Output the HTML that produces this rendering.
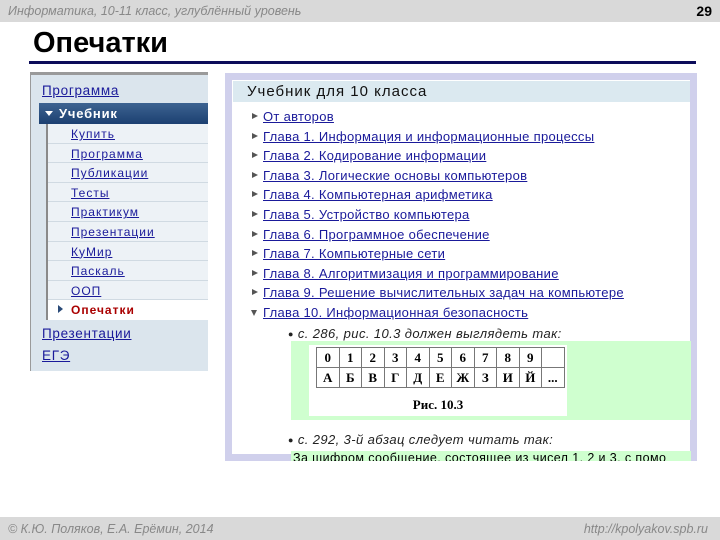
<!DOCTYPE html>
<html><head><meta charset="utf-8"><style>
*{margin:0;padding:0;box-sizing:border-box}
body{width:720px;height:540px;position:relative;background:#fff;font-family:"Liberation Sans",sans-serif;overflow:hidden}
.abs{position:absolute}
.top{left:0;top:0;width:720px;height:22px;background:#d9d9d9}
.top i{position:absolute;left:8px;top:4px;font-size:12.5px;color:#888}
.top b{position:absolute;right:8px;top:3px;font-size:14px;color:#000}
.bot{left:0;top:517px;width:720px;height:23px;background:#d9d9d9;font-style:italic;font-size:12.5px;color:#888}
h1{position:absolute;left:33px;top:27px;font-size:29px;font-weight:bold;color:#000}
.line{left:29px;top:61px;width:667px;height:3px;background:#0c0c5a}
.side{left:30px;top:72px;width:178px;height:299px;background:#dbe5ed;border-top:3px solid #9a9a9a;border-left:1px solid #9a9a9a}
.side a{color:#1a1a9a;text-decoration:underline;font-size:13.5px;letter-spacing:.7px}
.it{position:absolute;left:11px}
.bar{position:absolute;left:8px;top:28px;width:169px;height:21px;background:linear-gradient(#3d6391,#1c4071);color:#fff;font-weight:bold;font-size:13px;padding:3px 0 0 20px;letter-spacing:.8px}
.bar:before{content:"";position:absolute;left:6px;top:8px;border:4px solid transparent;border-top:5px solid #fff}
.sub{position:absolute;left:15px;top:49px;width:162px;height:196px;background:#edf2f6;border-left:2px solid #8a8a8a}
.sub div{height:19.6px;border-bottom:1px solid #d0dae2;padding:3px 0 0 23px;font-size:12px}
.sub a{font-size:12px;letter-spacing:1px}
.sub .cur{background:#fff;color:#a00;font-weight:bold;position:relative;letter-spacing:1px;border-bottom:none}
.sub .cur:before{content:"";position:absolute;left:10px;top:5px;border:4px solid transparent;border-left:5px solid #2a4a78;border-right:none}
.main{left:225px;top:73px;width:472px;height:388px;border:7px solid #d0d0ec;background:#fff}
.hd{position:absolute;left:1px;top:1px;width:457px;height:21px;background:#dbe9f0;font-size:15px;letter-spacing:1px;color:#111;padding:2px 0 0 14px}
.lst{position:absolute;left:20px;top:29px}
.lst div{height:19.6px;font-size:13px;letter-spacing:.3px;position:relative;padding-left:11px}
.lst div a{color:#1a1a9a;text-decoration:underline}
.lst div:before{content:"";position:absolute;left:0;top:4px;border:3px solid transparent;border-left:6px solid #555;border-right:none}
.lst div.dn:before{border:3px solid transparent;border-top:6px solid #555;left:-1px;top:5px}
.bl{position:absolute;left:56px;font-size:13px;letter-spacing:.4px;font-style:italic;color:#222}
.bl:before{content:"●";font-style:normal;font-size:9px;margin-right:4px;position:relative;top:-1px}
.grn{position:absolute;left:59px;width:400px;background:#cfffcf}
table{border-collapse:collapse;font-family:"Liberation Serif",serif;font-weight:bold;font-size:13px}
td{border:1px solid #777;width:22.5px;height:20px;text-align:center}
</style></head><body>
<div class="abs top"><i>Информатика, 10-11 класс, углублённый уровень</i><b>29</b></div>
<h1>Опечатки</h1>
<div class="abs line"></div>
<div class="abs side">
 <a class="it" style="top:8px">Программа</a>
 <div class="bar">Учебник</div>
 <div class="sub">
  <div><a>Купить</a></div><div><a>Программа</a></div><div><a>Публикации</a></div><div><a>Тесты</a></div><div><a>Практикум</a></div><div><a>Презентации</a></div><div><a>КуМир</a></div><div><a>Паскаль</a></div><div><a>ООП</a></div><div class="cur">Опечатки</div>
 </div>
 <a class="it" style="top:251px">Презентации</a>
 <a class="it" style="top:273px">ЕГЭ</a>
</div>
<div class="abs main">
 <div class="hd">Учебник для 10 класса</div>
 <div class="lst">
  <div><a>От авторов</a></div>
  <div><a>Глава 1. Информация и информационные процессы</a></div>
  <div><a>Глава 2. Кодирование информации</a></div>
  <div><a>Глава 3. Логические основы компьютеров</a></div>
  <div><a>Глава 4. Компьютерная арифметика</a></div>
  <div><a>Глава 5. Устройство компьютера</a></div>
  <div><a>Глава 6. Программное обеспечение</a></div>
  <div><a>Глава 7. Компьютерные сети</a></div>
  <div><a>Глава 8. Алгоритмизация и программирование</a></div>
  <div><a>Глава 9. Решение вычислительных задач на компьютере</a></div>
  <div class="dn"><a>Глава 10. Информационная безопасность</a></div>
 </div>
 <div class="bl" style="top:246px">с. 286, рис. 10.3 должен выглядеть так:</div>
 <div class="grn" style="top:261px;height:79px">
  <div style="position:absolute;left:18px;top:4px;width:258px;height:71px;background:#fff">
   <table style="position:absolute;left:7px;top:2px">
    <tr><td>0</td><td>1</td><td>2</td><td>3</td><td>4</td><td>5</td><td>6</td><td>7</td><td>8</td><td>9</td><td></td></tr>
    <tr><td>А</td><td>Б</td><td>В</td><td>Г</td><td>Д</td><td>Е</td><td>Ж</td><td>З</td><td>И</td><td>Й</td><td>...</td></tr>
   </table>
   <div style="position:absolute;left:0;width:258px;top:52px;text-align:center;font-family:'Liberation Serif',serif;font-weight:bold;font-size:13px">Рис. 10.3</div>
  </div>
 </div>
 <div class="bl" style="top:352px">с. 292, 3-й абзац следует читать так:</div>
 <div class="grn" style="top:371px;height:10px;overflow:hidden;font-size:12.5px;letter-spacing:.4px;line-height:14px;padding-left:2px;white-space:nowrap">За шифром сообщение, состоящее из чисел 1, 2 и 3, с помо</div>
</div>
<div class="abs bot"><span style="position:absolute;left:8px;top:5px">© К.Ю. Поляков, Е.А. Ерёмин, 2014</span><span style="position:absolute;right:12px;top:5px">http://kpolyakov.spb.ru</span></div>
</body></html>
